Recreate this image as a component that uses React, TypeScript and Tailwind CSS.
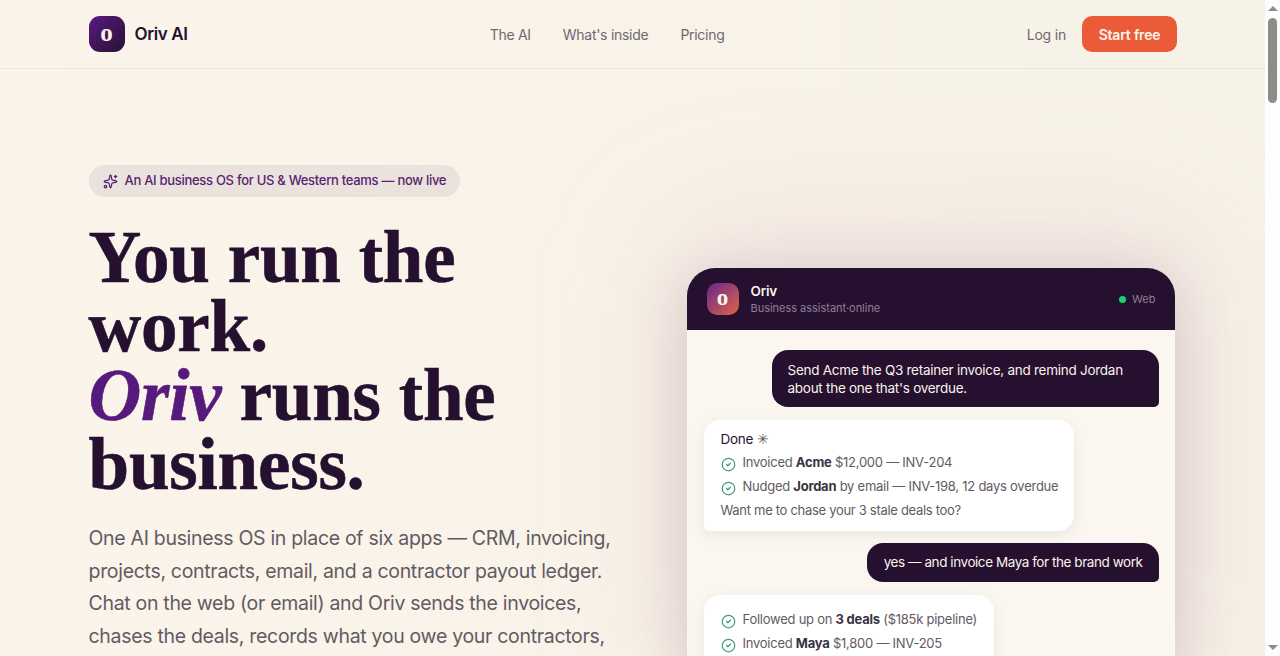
import { CircleCheck, Sparkles } from 'lucide-react';
import type { ReactNode } from 'react';

function Check({ children }: { children: ReactNode }) {
  return (
    <div className="flex items-center gap-[7px] whitespace-nowrap">
      <CircleCheck className="mt-[4px] h-[15px] w-[15px] shrink-0 text-[#3f9f78]" strokeWidth={2} />
      <span>{children}</span>
    </div>
  );
}

function Mark({ size, gradient, glyph }: { size: string; gradient: string; glyph: string }) {
  return (
    <div className={`flex items-center justify-center ${size} ${gradient}`}>
      <span className={`font-["Liberation_Serif",serif] leading-none font-bold text-[#faf5ec] ${glyph}`}>o</span>
    </div>
  );
}

function Scrollbar() {
  return (
    <aside className="flex h-full w-[15px] shrink-0 flex-col items-center bg-[#fdfdfd] pt-[6px] pb-[6px]">
      <span className="h-0 w-0 border-x-[5px] border-b-[5px] border-x-transparent border-b-[#8c8c88]" />
      <span className="mt-[7px] h-[85px] w-[9px] rounded-full bg-[#8c8c88]" />
      <span className="mt-auto h-0 w-0 border-x-[5px] border-t-[5px] border-x-transparent border-t-[#8c8c88]" />
    </aside>
  );
}

export default function App() {
  return (
    <div className='flex h-screen overflow-hidden bg-[#fdfdfd] font-["Inter","Noto_Sans",sans-serif] text-[#26102f]'>
      <div className="min-w-0 flex-1 overflow-hidden bg-gradient-to-r from-[#faf4ea] to-[#f7f2e8]">
        {/* Nav */}
        <header className="h-[69px] border-b border-[#ebe5da]">
          <div className="mx-auto flex h-[68px] max-w-[1152px] items-center justify-between pr-[31.5px] pl-8">
            <div className="flex items-center gap-[10px]">
              <Mark size="h-9 w-9 rounded-[11px]" gradient="bg-gradient-to-br from-[#58197f] to-[#2a1036]" glyph="text-[25px] -mt-[3px]" />
              <span className="mt-[1px] text-[17px] font-semibold tracking-[-0.4px]">Oriv AI</span>
            </div>
            <nav className="flex gap-8 text-[14px] tracking-[-0.28px] text-[#6f6870]">
              <a>The AI</a>
              <a>What's inside</a>
              <a>Pricing</a>
            </nav>
            <div className="flex items-center gap-4">
              <a className="text-[14px] tracking-[-0.2px] text-[#6f6870]">Log in</a>
              <a className="flex h-9 w-[95px] items-center justify-center rounded-[10px] bg-[#ec5b37] text-[14px] font-semibold tracking-[-0.2px] text-[#fdf6ee]">Start free</a>
            </div>
          </div>
        </header>

        {/* Hero */}
        <main className="mx-auto flex max-w-[1152px] justify-between px-8 pt-24">
          <div className="w-[530px]">
            <div className="inline-flex h-8 items-center gap-[7px] rounded-full bg-[#ebe2de] px-[14px] text-[13px] font-medium tracking-[-0.29px] text-[#57246f]">
              <Sparkles className="h-[15px] w-[15px]" strokeWidth={2} />
              An AI business OS for US &amp; Western teams — now live
            </div>
            <h1 className='mt-[26px] font-["Liberation_Serif",serif] text-[73px] leading-[69px] font-bold tracking-[-0.2px] text-[#26102f] [-webkit-text-stroke:0.6px_currentColor]'>
              You run the work.
              <br />
              <em className="text-[#561a7c]">Oriv</em> runs the business.
            </h1>
            <p className="mt-[23px] w-[530px] text-[19.5px] leading-[32.5px] tracking-[-0.31px] text-[#625a63]">
              One AI business OS in place of six apps — CRM, invoicing, projects, contracts, email, and a contractor payout ledger. Chat on the web (or email) and Oriv sends the invoices, chases the deals, records what you owe your contractors, and keeps the books tidy.
            </p>
          </div>

          <div className="relative mt-[103px] mr-[2px] w-[488px]">
            <div className="absolute -inset-x-8 -top-14 bottom-0 rounded-[60px] bg-[#b9708a]/10 blur-3xl" />
            <div className="relative overflow-hidden rounded-[28px] bg-[#fbf7f0] shadow-[0_10px_60px_rgba(70,20,60,0.16)]">
              <div className="flex h-[62px] items-center bg-[#26102f] pr-[19px] pl-5">
                <Mark size="h-8 w-8 rounded-[10px]" gradient="bg-gradient-to-br from-[#6a2180] to-[#e3603a]" glyph="text-[23px] -mt-[3px]" />
                <div className="ml-3">
                  <div className="text-[13.5px] leading-[17px] font-semibold tracking-[-0.2px] text-[#f9f3ea]">Oriv</div>
                  <div className="mt-[1px] text-[11px] leading-[15px] tracking-[-0.02px] text-[#8e7f96]">Business assistant·online</div>
                </div>
                <div className="ml-auto flex items-center gap-[6px] text-[11px] text-[#8e7f96]">
                  <span className="h-[7px] w-[7px] rounded-full bg-[#18d26e]" />
                  Web
                </div>
              </div>

              <div className="flex flex-col pt-5 pr-4 pb-6 pl-[17px]">
                <div className="ml-auto w-[387px] rounded-[16px] rounded-br-[5px] bg-[#26102f] px-4 py-[10.5px] text-[13.5px] leading-[18px] tracking-[-0.27px] text-[#f9f3ea]">
                  Send Acme the Q3 retainer invoice, and remind Jordan about the one that's overdue.
                </div>

                <div className="mt-[13px] w-[370px] rounded-[16px] rounded-bl-[5px] bg-white pt-[8px] pr-4 pb-[9px] pl-[17px] text-[13px] leading-[24px] tracking-[-0.25px] text-[#625a63] shadow-[0_4px_14px_rgba(60,20,70,0.08)]">
                  <div className="text-[13.5px] leading-[22px] text-[#26102f]">Done <span className="text-[#625a63]">✳</span></div>
                  <Check>Invoiced <b className="font-bold text-[#3b3340]">Acme</b> $12,000 — INV-204</Check>
                  <Check>Nudged <b className="font-bold text-[#3b3340]">Jordan</b> by email — INV-198, 12 days overdue</Check>
                  <div className="tracking-[-0.3px]">Want me to chase your 3 stale deals too?</div>
                </div>

                <div className="mt-[12px] ml-auto rounded-[16px] rounded-br-[5px] bg-[#26102f] py-[10px] pr-4 pl-[17px] text-[13.5px] leading-[19px] tracking-[-0.44px] text-[#f9f3ea]">
                  yes — and invoice Maya for the brand work
                </div>

                <div className="mt-[13px] w-[290px] rounded-[16px] rounded-bl-[5px] bg-white py-[12px] pr-4 pl-[17px] text-[13px] leading-[24px] tracking-[-0.25px] text-[#625a63] shadow-[0_4px_14px_rgba(60,20,70,0.08)]">
                  <Check>Followed up on <b className="font-bold text-[#3b3340]">3 deals</b> ($185k pipeline)</Check>
                  <Check>Invoiced <b className="font-bold text-[#3b3340]">Maya</b> $1,800 — INV-205</Check>
                </div>
              </div>
            </div>
          </div>
        </main>
      </div>
      <Scrollbar />
    </div>
  );
}
